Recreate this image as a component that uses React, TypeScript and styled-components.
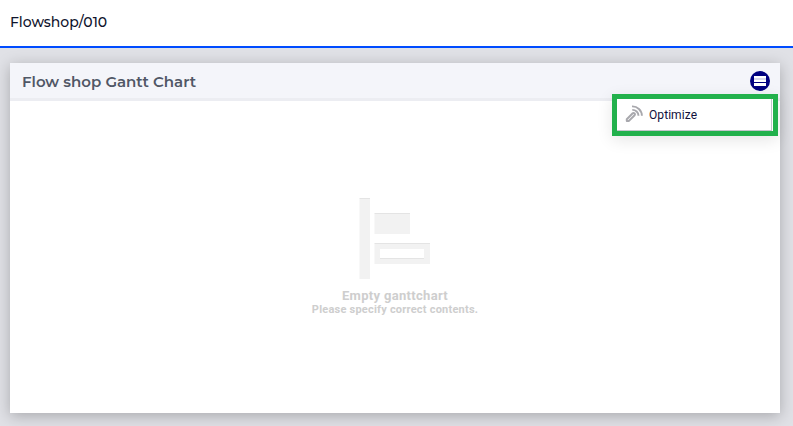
import React from "react";
import styled, { createGlobalStyle } from "styled-components";

const GlobalStyle = createGlobalStyle`
  * { box-sizing: border-box; }
  body { margin: 0; overflow: hidden; }
`;

const Page = styled.div`
  display: flex;
  flex-direction: column;
  height: 426px;
  background: #e0e1e6;
  font-family: Roboto, sans-serif;
`;

const TopBar = styled.header`
  height: 48px;
  flex: none;
  padding: 12px 10px 0;
  background: #fff;
  border-bottom: 2px solid #004bff;
`;

const Breadcrumb = styled.h1`
  margin: 0;
  font: 500 14px/20px Montserrat, Inter, sans-serif;
  letter-spacing: -0.03px;
  color: #10142d;
  white-space: nowrap;
`;

const Content = styled.main`
  flex: 1;
  padding: 15px 13px 13px 10px;
`;

const Card = styled.section`
  position: relative;
  display: flex;
  flex-direction: column;
  height: 350px;
  background: #fff;
  box-shadow: 0 3px 14px rgba(0, 0, 0, 0.25);
`;

const CardHeader = styled.div`
  display: flex;
  align-items: center;
  justify-content: space-between;
  height: 38px;
  flex: none;
  padding: 0 10px 0 12px;
  background: #f4f5fa;
  border-bottom: 3px solid #ecedf2;
`;

const CardTitle = styled.h2`
  margin: 2px 0 0;
  font: 600 15px/20px Montserrat, Inter, sans-serif;
  color: #505766;
  white-space: nowrap;
`;

const MenuButton = styled.button`
  width: 20px;
  height: 20px;
  margin-top: 1px;
  padding: 0;
  border: 0;
  background: none;
  svg { display: block; }
`;

const Menu = styled.div`
  position: absolute;
  top: 31px;
  right: 2px;
  width: 166px;
  height: 42px;
  border: 5px solid #22b14c;
  background: #fff;
  box-shadow: 0 4px 16px rgba(0, 0, 0, 0.1);
`;

const MenuItem = styled.div`
  display: flex;
  align-items: center;
  width: 155px;
  height: 32px;
  padding-left: 8px;
  gap: 5px;
  border-right: 1px solid #c5c5cd;
  border-bottom: 1px solid #c5c5cd;
  font-size: 12px;
  letter-spacing: 0.07px;
  color: #10103c;
  svg { margin-top: -2px; }
`;

const EmptyState = styled.div`
  display: flex;
  flex-direction: column;
  align-items: center;
  padding-top: 97px;
  color: #cecece;
  font-weight: 700;
  white-space: nowrap;
`;

const EmptyTitle = styled.div`
  margin-top: 8px;
  font-size: 13px;
  line-height: 16px;
  letter-spacing: 0.32px;
`;

const EmptyHint = styled.div`
  font-size: 11px;
  line-height: 12px;
  letter-spacing: 0.22px;
`;

const ListIcon = () => (
  <svg width="20" height="20" viewBox="0 0 20 20" shapeRendering="geometricPrecision">
    <circle cx="10" cy="10" r="10" fill="#000080" />
    <rect x="4" y="5" width="12" height="6" fill="#fff" />
    <rect x="4" y="7" width="12" height="2" fill="#d8d8ec" />
    <rect x="4" y="12" width="12" height="3" fill="#fff" />
  </svg>
);

const WandIcon = () => (
  <svg width="19" height="18" viewBox="0 0 19 18" fill="none" stroke="#a8a8ad">
    <path
      strokeWidth="2"
      strokeLinejoin="round"
      d="M1.8 14.2 7.7 8.3a1.2 1.2 0 0 1 1.7 0l.2.2a1.2 1.2 0 0 1 0 1.7L3.7 16.1H1.8z"
    />
    <path strokeWidth="1.9" d="M7 1.4a9.5 9.5 0 0 1 9.9 9.4M7.3 4.9a6 6 0 0 1 6.2 5.9" />
  </svg>
);

const GanttIcon = () => (
  <svg width="72" height="82" viewBox="0 0 72 82">
    <path fill="#f2f2f2" d="M.5 1h10.5v80H.5zM15.5 16H51v20H15.5zM15.5 46H71v20H15.5zM21 51v10h44V51z" fillRule="evenodd" />
    <path fill="#e4e4e4" d="M.5 0H11v1H.5zM15.5 15H51v1H15.5zM15.5 45H71v1H15.5zM21 60h44v1H21z" />
  </svg>
);

export default function App() {
  return (
    <Page>
      <GlobalStyle />
      <TopBar>
        <Breadcrumb>Flowshop/010</Breadcrumb>
      </TopBar>
      <Content>
        <Card>
          <CardHeader>
            <CardTitle>Flow shop Gantt Chart</CardTitle>
            <MenuButton aria-label="Menu">
              <ListIcon />
            </MenuButton>
          </CardHeader>
          <EmptyState>
            <GanttIcon />
            <EmptyTitle>Empty ganttchart</EmptyTitle>
            <EmptyHint>Please specify correct contents.</EmptyHint>
          </EmptyState>
          <Menu>
            <MenuItem>
              <WandIcon />
              Optimize
            </MenuItem>
          </Menu>
        </Card>
      </Content>
    </Page>
  );
}
